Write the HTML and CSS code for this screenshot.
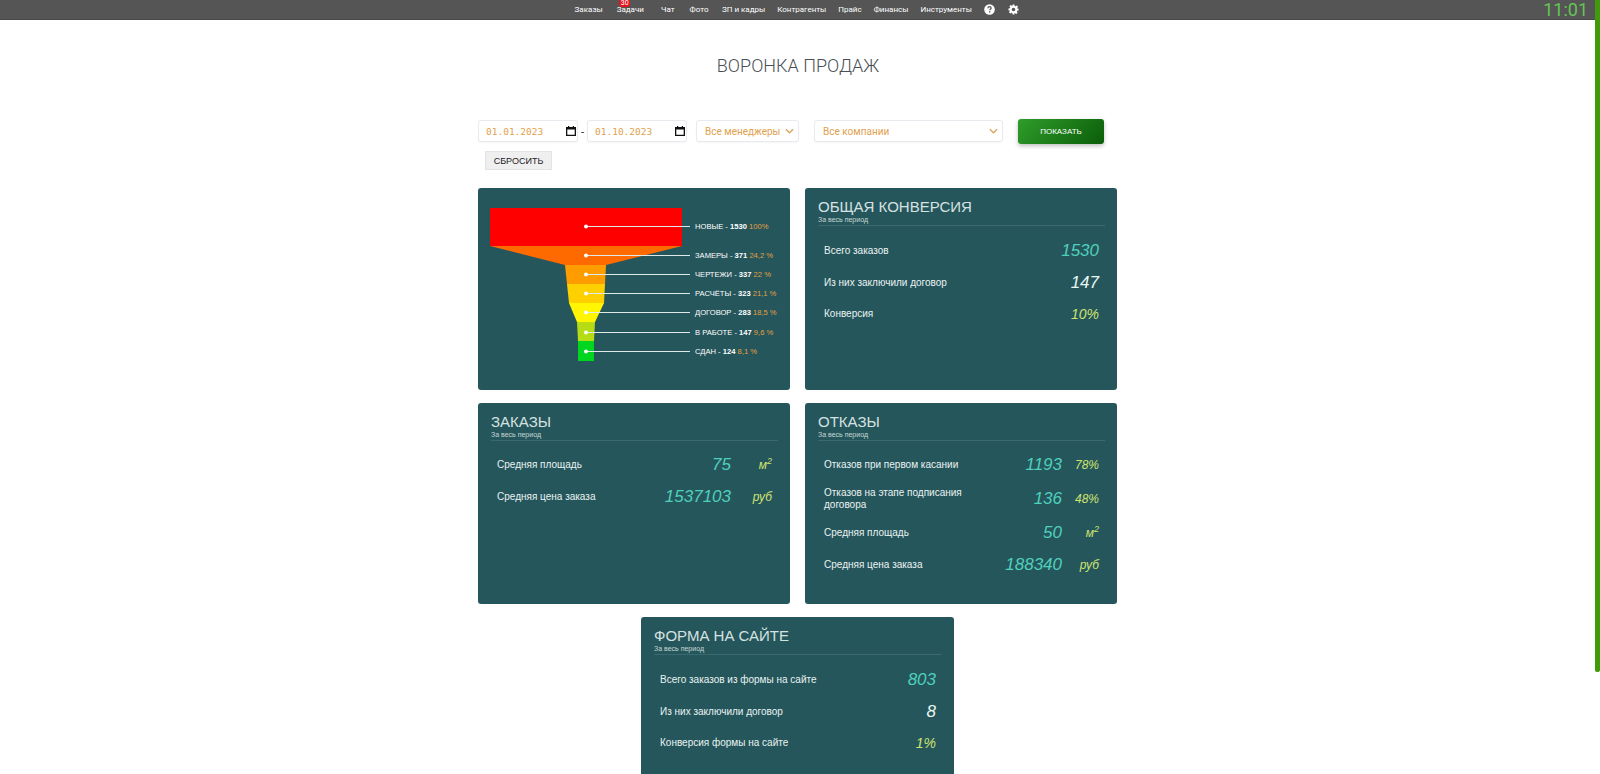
FILE: index.html
```html
<!DOCTYPE html>
<html lang="ru">
<head>
<meta charset="utf-8">
<title>Воронка продаж</title>
<link rel="stylesheet" href="styles.css">
</head>
<body>
<header class="topbar">
  <nav class="nav">
    <a class="nav-item wide">Заказы</a>
    <a class="nav-item wide has-badge">Задачи<span class="badge">30</span></a>
    <a class="nav-item wide">Чат</a>
    <a class="nav-item wide">Фото</a>
    <a class="nav-item">ЗП и кадры</a>
    <a class="nav-item">Контрагенты</a>
    <a class="nav-item">Прайс</a>
    <a class="nav-item">Финансы</a>
    <a class="nav-item">Инструменты</a>
    <svg class="nav-icon" viewBox="0 0 24 24"><circle cx="12" cy="12" r="11.5" fill="#fff"/><path d="M8.6 9.2c0-2 1.5-3.4 3.5-3.4s3.4 1.2 3.4 3c0 2.6-3 2.600-3 5" fill="none" stroke="#555" stroke-width="2.800"/><rect x="10.900" y="15.800" width="2.900" height="2.900" fill="#555"/></svg>
    <svg class="nav-icon" viewBox="0 0 24 24"><path fill="#fff" fill-rule="evenodd" d="M10 1h4l.6 3.100 1.900.8 2.600-1.800 2.800 2.800-1.800 2.600.8 1.900L23 10v4l-3.100.6-.8 1.900 1.800 2.600-2.800 2.800-2.600-1.800-1.900.8L14 23h-4l-.6-3.100-1.900-.8-2.600 1.800-2.800-2.800 1.800-2.600-.8-1.900L1 14v-4l3.100-.6.8-1.900-1.800-2.600 2.800-2.800 2.600 1.800 1.900-.8zM12 8a4 4 0 1 0 0 8 4 4 0 0 0 0-8z"/></svg>
  </nav>
  <div class="clock">11:01</div>
</header>
<div class="scroll-thumb"></div>

<main class="page">
  <h1 class="title">ВОРОНКА ПРОДАЖ</h1>

  <form class="filters">
    <div class="filter-row">
      <div class="field date"><span>01.01.2023</span><svg class="cal" viewBox="0 0 12 12"><path d="M1 2h10v9H1z M2.300 4.500v5.200h7.400V4.500z" fill="#111" fill-rule="evenodd"/><rect x="3" y="1" width="1.200" height="1.500" fill="#111"/><rect x="7.800" y="1" width="1.200" height="1.500" fill="#111"/></svg></div>
      <span class="dash">-</span>
      <div class="field date"><span>01.10.2023</span><svg class="cal" viewBox="0 0 12 12"><path d="M1 2h10v9H1z M2.300 4.500v5.200h7.400V4.500z" fill="#111" fill-rule="evenodd"/><rect x="3" y="1" width="1.200" height="1.500" fill="#111"/><rect x="7.800" y="1" width="1.200" height="1.500" fill="#111"/></svg></div>
      <div class="field select managers"><span>Все менеджеры</span><svg class="chev" viewBox="0 0 10 6"><path d="M1 1l4 4 4-4" fill="none" stroke="#d9a760" stroke-width="1.500"/></svg></div>
      <div class="field select companies"><span>Все компании</span><svg class="chev" viewBox="0 0 10 6"><path d="M1 1l4 4 4-4" fill="none" stroke="#d9a760" stroke-width="1.500"/></svg></div>
      <button class="btn-show" type="button">ПОКАЗАТЬ</button>
    </div>
    <button class="btn-reset" type="button">СБРОСИТЬ</button>
  </form>

  <section class="grid">
    <article class="card funnel-card">
      <svg class="funnel" viewBox="0 0 312 202" width="312" height="202">
        <polygon points="12,20 204,20 204,58 12,58" fill="#ff0000"/>
        <polygon points="12,58 204,58 128,77 87,77" fill="#ff6a00"/>
        <polygon points="87,77 128,77 127,96 89,96" fill="#ff9d00"/>
        <polygon points="89,96 127,96 126,115 91,115" fill="#ffd000"/>
        <polygon points="91,115 126,115 117,134 99,134" fill="#fff600"/>
        <polygon points="99,134 117,134 116,153 100,153" fill="#b5dc14"/>
        <polygon points="100,153 116,153 116,173 100,173" fill="#00d61f"/>
        <g class="leader">
          <line x1="108" y1="38.500" x2="212" y2="38.500"/><circle cx="108" cy="38.500" r="2"/>
          <line x1="108" y1="67.500" x2="212" y2="67.500"/><circle cx="108" cy="67.500" r="2"/>
          <line x1="108" y1="86.500" x2="212" y2="86.500"/><circle cx="108" cy="86.500" r="2"/>
          <line x1="108" y1="105.500" x2="212" y2="105.500"/><circle cx="108" cy="105.500" r="2"/>
          <line x1="108" y1="124.500" x2="212" y2="124.500"/><circle cx="108" cy="124.500" r="2"/>
          <line x1="108" y1="144.500" x2="212" y2="144.500"/><circle cx="108" cy="144.500" r="2"/>
          <line x1="108" y1="163.500" x2="212" y2="163.500"/><circle cx="108" cy="163.500" r="2"/>
        </g>
        <g class="labels">
          <text x="217" y="41">НОВЫЕ - <tspan class="n">1530</tspan> <tspan class="p">100%</tspan></text>
          <text x="217" y="70">ЗАМЕРЫ - <tspan class="n">371</tspan> <tspan class="p">24,2 %</tspan></text>
          <text x="217" y="89">ЧЕРТЕЖИ - <tspan class="n">337</tspan> <tspan class="p">22 %</tspan></text>
          <text x="217" y="108">РАСЧЁТЫ - <tspan class="n">323</tspan> <tspan class="p">21,1 %</tspan></text>
          <text x="217" y="127">ДОГОВОР - <tspan class="n">283</tspan> <tspan class="p">18,5 %</tspan></text>
          <text x="217" y="147">В РАБОТЕ - <tspan class="n">147</tspan> <tspan class="p">9,6 %</tspan></text>
          <text x="217" y="166">СДАН - <tspan class="n">124</tspan> <tspan class="p">8,1 %</tspan></text>
        </g>
      </svg>
    </article>

    <article class="card first-row">
      <h2 class="card-title">ОБЩАЯ КОНВЕРСИЯ</h2>
      <p class="card-sub">За весь период</p>
      <div class="rows">
        <div class="row"><span class="lbl">Всего заказов</span><span class="val teal">1530</span></div>
        <div class="row"><span class="lbl">Из них заключили договор</span><span class="val white">147</span></div>
        <div class="row short"><span class="lbl">Конверсия</span><span class="val lime small">10%</span></div>
      </div>
    </article>

    <article class="card">
      <h2 class="card-title">ЗАКАЗЫ</h2>
      <p class="card-sub">За весь период</p>
      <div class="rows">
        <div class="row"><span class="lbl">Средняя площадь</span><span class="val teal">75</span><span class="unit">м<sup>2</sup></span></div>
        <div class="row"><span class="lbl">Средняя цена заказа</span><span class="val teal">1537103</span><span class="unit">руб</span></div>
      </div>
    </article>

    <article class="card refusals">
      <h2 class="card-title">ОТКАЗЫ</h2>
      <p class="card-sub">За весь период</p>
      <div class="rows">
        <div class="row"><span class="lbl">Отказов при первом касании</span><span class="val teal">1193</span><span class="unit">78%</span></div>
        <div class="row tall"><span class="lbl narrow">Отказов на этапе подписания договора</span><span class="val teal">136</span><span class="unit">48%</span></div>
        <div class="row"><span class="lbl">Средняя площадь</span><span class="val teal">50</span><span class="unit">м<sup>2</sup></span></div>
        <div class="row"><span class="lbl">Средняя цена заказа</span><span class="val teal">188340</span><span class="unit">руб</span></div>
      </div>
    </article>

    <article class="card centered">
      <h2 class="card-title">ФОРМА НА САЙТЕ</h2>
      <p class="card-sub">За весь период</p>
      <div class="rows form-rows">
        <div class="row"><span class="lbl">Всего заказов из формы на сайте</span><span class="val teal">803</span></div>
        <div class="row"><span class="lbl">Из них заключили договор</span><span class="val white">8</span></div>
        <div class="row short"><span class="lbl">Конверсия формы на сайте</span><span class="val lime small">1%</span></div>
      </div>
    </article>
  </section>
</main>
</body>
</html>
```
FILE: styles.css
```css
* { box-sizing: border-box; }
html, body { margin: 0; height: 774px; overflow: hidden; background: #fff; }
body { font-family: "Liberation Sans", Arial, sans-serif; color: #333; position: relative; }

.topbar {
  height: 20px;
  background: #555;
  border-bottom: 1px solid #4a4a4a;
  display: flex;
  justify-content: center;
  position: relative;
}
.nav { display: flex; align-items: center; padding-right: 7px; }
.nav-item {
  color: #fff;
  font-size: 8px;
  font-family: Roboto, sans-serif;
  font-weight: 400;
  padding: 0 6px;
  position: relative;
  white-space: nowrap;
  line-height: 19px;
}
.nav-item.wide { padding: 0 7.500px; }
.nav-item.has-badge { padding: 0 9.500px 0 6.500px; }
.badge {
  position: absolute;
  top: -1px;
  left: 9px;
  width: 11px;
  height: 8px;
  background: #e8141c;
  border-radius: 3px;
  font-size: 7px;
  line-height: 8px;
  text-align: center;
  color: #fff;
}
.nav-icon { width: 11px; height: 11px; margin-left: 6px; margin-right: 7px; flex: none; }
.clock {
  position: absolute;
  right: 12px;
  top: 0;
  font-family: Roboto, sans-serif;
  font-weight: 400;
  font-size: 18px;
  line-height: 20px;
  color: #66c455;
}
.scroll-thumb {
  position: absolute;
  top: 0;
  right: 0;
  width: 5px;
  height: 672px;
  background: #3f9a0c;
  border-radius: 0 0 2px 2px;
}

.page { width: 640px; margin-left: 478px; }
.title {
  margin: 0;
  padding-top: 36px;
  height: 94px;
  text-align: center;
  font-family: Roboto, sans-serif;
  font-weight: 300;
  font-size: 18px;
  line-height: 20px;
  color: #4a4f55;
}

.filters { height: 74px; }
.filter-row { display: flex; align-items: center; height: 31px; padding-top: 3px; }
.field {
  height: 22px;
  background: #fff;
  border: 1px solid #e9e9ef;
  border-radius: 3px;
  box-shadow: 0 1px 2px rgba(0,0,0,.04);
  color: #dfa14f;
  display: flex;
  align-items: center;
  justify-content: space-between;
  white-space: nowrap;
}
.date {
  width: 100px;
  padding: 0 0 0 7px;
  font-family: "DejaVu Sans Mono", monospace;
  font-size: 9.500px;
}
.cal { width: 12px; height: 12px; }
.dash { width: 9px; text-align: center; font-size: 11px; color: #333; }
.select {
  font-family: Roboto, sans-serif;
  font-size: 10px;
  padding: 0 4px 0 8px;
}
.managers { width: 103px; margin-left: 9px; }
.companies { width: 189px; margin-left: 15px; }
.chev { width: 9px; height: 6px; }
.btn-show {
  width: 86px;
  height: 25px;
  margin-left: 15px;
  border: 0;
  border-radius: 3px;
  background: linear-gradient(135deg, #2f9d2a, #0b5d0a);
  box-shadow: 0 2px 4px rgba(0,0,0,.25);
  color: #fff;
  font-family: "Liberation Sans", sans-serif;
  font-size: 8px;
}
.btn-reset {
  display: block;
  margin: 6px 0 0 7px;
  width: 67px;
  height: 19px;
  background: #efefef;
  border: 1px solid #e3e3e3;
  color: #222;
  font-family: "Liberation Sans", sans-serif;
  font-size: 9px;
  padding: 0;
}

.grid {
  display: grid;
  grid-template-columns: 312px 312px;
  grid-template-rows: 202px 201px 202px;
  gap: 13px 15px;
}
.card {
  background: #25565c;
  border-radius: 3px;
  padding: 11px 12px 11px 13px;
  color: #fff;
}
.funnel-card { padding: 0; }
.funnel { display: block; }
.leader line { stroke: #dfeae8; stroke-width: 1; }
.leader circle { fill: #fff; }
.labels text { font-size: 7.600px; fill: #fff; font-family: "Liberation Sans", sans-serif; }
.labels .n { font-weight: 700; }
.labels .p { fill: #e3a040; }

.centered { grid-column: 1 / -1; width: 313px; justify-self: center; }

.card-title {
  margin: 0;
  font-size: 15px;
  line-height: 16px;
  font-weight: 400;
  color: #d6e2e1;
}
.card-sub {
  margin: 0;
  font-size: 7px;
  line-height: 9px;
  color: #c6d6d4;
  padding-bottom: 1px;
  border-bottom: 1px solid #3a6a6f;
}
.rows { padding: 8px 6px 0; }
.first-row .rows { padding-top: 9px; }
.form-rows { padding-top: 9px; }
.row { display: flex; align-items: center; height: 32px; }
.row.short { height: 29px; }
.row.tall { height: 36px; }
.lbl { flex: 1; font-size: 10px; line-height: 12px; color: #eaf3f1; }
.lbl.narrow { flex: none; width: 160px; margin-right: auto; }
.val { font-style: italic; font-size: 17px; line-height: 20px; }
.val.small { font-size: 14px; }
.teal { color: #4fd0bb; }
.white { color: #e8f6f2; }
.lime { color: #cfe36f; }
.unit {
  width: 41px;
  text-align: right;
  font-style: italic;
  font-size: 12px;
  color: #cfe36f;
}
.refusals .unit { width: 37px; }
.unit sup { font-size: 9px; line-height: 0; }
```
